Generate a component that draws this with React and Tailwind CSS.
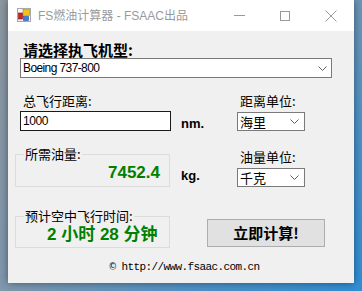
import React from "react";

const cjk = { fontFamily: '"Noto Sans CJK SC", "Noto Sans", sans-serif' };
const latinCjk = { fontFamily: '"Liberation Sans", "Noto Sans CJK SC", sans-serif' };

function Chevron() {
  return (
    <svg width="9" height="5" viewBox="0 0 9 5" className="shrink-0">
      <path d="M0.5 0.5 L4.5 4.5 L8.5 0.5" fill="none" stroke="#606060" strokeWidth="1" />
    </svg>
  );
}

function AppIcon() {
  return (
    <svg width="14" height="14" viewBox="0 0 14 14">
      <rect x="0.5" y="0.5" width="13" height="13" fill="#f4f4f4" stroke="#a8a8a8" />
      <rect x="6" y="1.5" width="6.5" height="6" fill="#f2c21b" stroke="#b08a10" strokeWidth="0.6" />
      <rect x="1.5" y="5" width="4" height="6" fill="#d42020" stroke="#8a1010" strokeWidth="0.6" />
      <rect x="6.5" y="8.5" width="5" height="4" fill="#3a7fe0" stroke="#1c50a0" strokeWidth="0.6" />
    </svg>
  );
}

function Select({ value }) {
  return (
    <div className="w-[68px] h-[19px] bg-white border border-[#7a7a7a] flex items-center justify-between pl-[2px] pr-[5px]">
      <span className="text-[13px] leading-[15px] text-black" style={cjk}>{value}</span>
      <Chevron />
    </div>
  );
}

export default function App() {
  return (
    <div className="w-[362px] h-[291px] overflow-hidden bg-[linear-gradient(135deg,#8c97a0_0%,#7f98ae_45%,#4c92c8_75%,#2f8fd6_100%)]">
      <div className="ml-[8px] w-[346px] h-[283px] flex flex-col shadow-[0_0_8px_rgba(0,0,0,0.45)]">
        {/* Title bar */}
        <div className="h-[31px] bg-white flex items-center shrink-0">
          <div className="ml-[9px] mt-[-2px]">
            <AppIcon />
          </div>
          <span className="ml-[7px] text-[12px] text-[#9a9a9a] leading-[16px]" style={latinCjk}>
            FS燃油计算器 - FSAAC出品
          </span>
          <div className="ml-auto flex items-center h-full">
            <div className="w-[46px] h-full flex items-center justify-center">
              <div className="w-[11px] h-[1px] bg-[#9a9a9a]" />
            </div>
            <div className="w-[46px] h-full flex items-center justify-center">
              <div className="w-[10px] h-[10px] border border-[#9a9a9a]" />
            </div>
            <div className="w-[46px] h-full flex items-center justify-center">
              <svg width="12" height="12" viewBox="0 0 12 12">
                <path d="M0.5 0.5 L11.5 11.5 M11.5 0.5 L0.5 11.5" stroke="#9a9a9a" strokeWidth="1" />
              </svg>
            </div>
          </div>
        </div>

        {/* Client area */}
        <div className="flex-1 bg-[#f0f0f0] pl-[7px] flex flex-col text-black">
          <div className="mt-[10px] ml-[8px] text-[15px] leading-[17px] font-bold" style={cjk}>
            请选择执飞机型:
          </div>
          <div className="ml-[5px] w-[312px] h-[20px] bg-white border border-[#7a7a7a] flex items-center justify-between pl-[2px] pr-[4px]">
            <span className="text-[12px] tracking-[-0.6px]" style={latinCjk}>Boeing 737-800</span>
            <Chevron />
          </div>

          {/* Distance row */}
          <div className="mt-[15px] grid grid-cols-[166px_56px_68px]">
            <div className="flex flex-col">
              <div className="ml-[8px] text-[13px] leading-[16px]" style={cjk}>总飞行距离:</div>
              <div className="ml-[5px] mt-[2px] w-[151px] h-[20px] bg-white border border-[#1a1a1a] flex items-center pl-[2px]">
                <span className="text-[12px] tracking-[-0.4px]" style={latinCjk}>1000</span>
              </div>
            </div>
            <div className="pt-[23px] text-[13px] leading-[16px] font-bold" style={latinCjk}>nm.</div>
            <div className="flex flex-col">
              <div className="ml-[3px] text-[13px] leading-[16px]" style={cjk}>距离单位:</div>
              <div className="mt-[3px]">
                <Select value="海里" />
              </div>
            </div>
          </div>

          {/* Fuel row */}
          <div className="mt-[14px] grid grid-cols-[166px_56px_68px]">
            <fieldset className="w-[155px] h-[41px] border border-[#dcdcdc] flex flex-col">
              <legend className="ml-[8px] px-[1px] text-[13px] leading-[16px]" style={cjk}>所需油量:</legend>
              <div className="mt-[1px] pr-[9px] text-right text-[17px] leading-[20px] font-bold text-[#008000]" style={latinCjk}>
                7452.4
              </div>
            </fieldset>
            <div className="pt-[22px] text-[13px] leading-[16px] font-bold" style={latinCjk}>kg.</div>
            <div className="flex flex-col">
              <div className="ml-[3px] mt-[3px] text-[13px] leading-[16px]" style={cjk}>油量单位:</div>
              <div className="mt-[3px]">
                <Select value="千克" />
              </div>
            </div>
          </div>

          {/* Time row */}
          <div className="mt-[21px] flex items-start">
            <fieldset className="w-[155px] h-[40px] border border-[#dcdcdc] flex flex-col">
              <legend className="ml-[8px] px-[1px] text-[13px] leading-[16px]" style={cjk}>预计空中飞行时间:</legend>
              <div className="mt-[1px] pl-[31px] text-[17px] leading-[20px] font-bold text-[#008000] whitespace-nowrap" style={latinCjk}>
                2 小时 28 分钟
              </div>
            </fieldset>
            <button className="ml-[37px] mt-[11px] w-[118px] h-[28px] bg-[#e1e1e1] border border-[#adadad] flex items-center justify-center text-[15px] font-bold leading-[18px]" style={cjk}>
              立即计算!
            </button>
          </div>

          <div
            className="mt-[12px] text-center text-[11px] leading-[14px] tracking-[-0.6px] text-black"
            style={{ fontFamily: '"Liberation Mono", "DejaVu Sans Mono", monospace' }}
          >
            © http://www.fsaac.com.cn
          </div>
        </div>
      </div>
    </div>
  );
}
